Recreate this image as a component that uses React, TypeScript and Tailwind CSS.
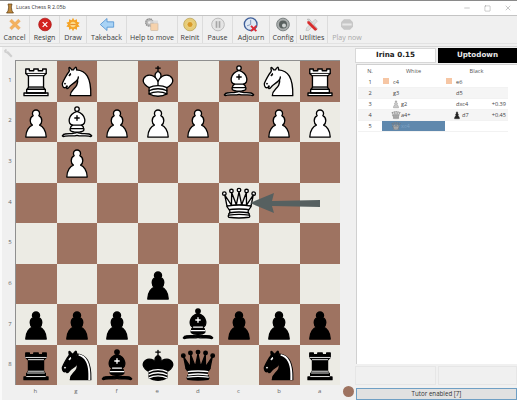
import React from "react";
import { Minus, Square, X } from "lucide-react";

type Kind = "p" | "r" | "n" | "b" | "k" | "q";

function Shapes({ kind, fill, line, inner }: { kind: Kind; fill: string; line: string; inner: string }) {
  const base = { fill, stroke: line, strokeWidth: 1.5, strokeLinecap: "round" as const, strokeLinejoin: "round" as const };
  const det = { fill: "none", stroke: inner, strokeWidth: 1.5, strokeLinecap: "round" as const, strokeLinejoin: "round" as const };
  if (kind === "p")
    return <path {...base} d="M22.5 9C20.29 9 18.5 10.79 18.5 13C18.5 13.89 18.79 14.71 19.28 15.38C17.33 16.5 16 18.59 16 21C16 23.03 16.94 24.84 18.41 26.03C15.41 27.09 11 31.58 11 39.5L34 39.5C34 31.58 29.59 27.09 26.59 26.03C28.06 24.84 29 23.03 29 21C29 18.59 27.67 16.5 25.72 15.38C26.21 14.71 26.5 13.89 26.5 13C26.5 10.79 24.71 9 22.5 9z" />;
  if (kind === "r")
    return (
      <g>
        <path {...base} d="M9 39L36 39L36 36L9 36z" />
        <path {...base} d="M12 36L12 32L33 32L33 36z" />
        <path {...base} d="M11 14L11 9L15 9L15 11L20 11L20 9L25 9L25 11L30 11L30 9L34 9L34 14L31 17L14 17z" />
        <path {...base} d="M31 17L31 29.5L14 29.5L14 17" />
        <path {...base} d="M31 29.5L32.5 32L12.5 32L14 29.5" />
        <path {...det} d="M12 35.5L33 35.5M13 31.5L32 31.5M14 29.5L31 29.5M14 16.5L31 16.5M11 14L34 14" strokeWidth={1} />
      </g>
    );
  if (kind === "n")
    return (
      <g>
        <path {...base} d="M22 10C32.5 11 38.5 18 38 39L15 39C15 30 25 32.5 23 18" />
        <path {...base} d="M24 18C24.38 20.91 18.45 25.37 16 27C13 29 13.18 31.34 11 31C9.958 30.06 12.41 27.96 11 28C10 28 11.19 29.23 10 30C9 30 5.997 31 6 26C6 24 12 14 12 14C12 14 13.89 12.1 14 10.5C13.27 9.506 13.5 8.5 13.5 7.5C14.5 6.5 16.5 10 16.5 10L18.5 10C18.5 10 19.28 8.008 21 7C22 7 22 10 22 10" />
        <circle cx="9" cy="25.5" r="0.6" fill={inner} stroke={inner} />
        <ellipse cx="14.5" cy="15.5" rx="0.6" ry="1.5" fill={inner} stroke={inner} transform="rotate(30 14.5 15.5)" />
        {inner === "#fff" && <path d="M24.55 10.4L24.1 11.85L24.6 12C27.75 13 30.25 14.49 32.5 18.75C34.75 23.01 35.75 29.06 35.25 39L35.2 39.5L37.45 39.5L37.5 39C38 28.94 36.62 22.15 34.25 17.66C31.88 13.17 28.46 11.02 25.06 10.5z" fill="#fff" stroke="none" />}
      </g>
    );
  if (kind === "b")
    return (
      <g>
        <path {...base} d="M9 36C12.39 35.03 19.11 36.43 22.5 34C25.89 36.43 32.61 35.03 36 36C36 36 37.65 36.54 39 38C38.32 38.97 37.35 38.99 36 38.5C32.61 37.53 25.89 38.96 22.5 37.5C19.11 38.96 12.39 37.53 9 38.5C7.65 38.99 6.68 38.97 6 38C7.35 36.06 9 36 9 36z" />
        <path {...base} d="M15 32C17.5 34.5 27.5 34.5 30 32C30.5 30.5 30 30 30 30C30 27.5 27.5 26 27.5 26C33 24.5 33.5 14.5 22.5 10.5C11.5 14.5 12 24.5 17.5 26C17.5 26 15 27.5 15 30C15 30 14.5 30.5 15 32z" />
        <circle {...base} cx="22.5" cy="8" r="2.5" />
        <path {...det} d="M17.5 26L27.5 26M15 30L30 30M22.5 15.5L22.5 20.5M20 18L25 18" />
      </g>
    );
  if (kind === "k")
    return (
      <g>
        <path {...base} fill="none" stroke={line} d="M22.5 11.63L22.5 6M20 8L25 8" />
        <path {...base} d="M22.5 25C22.5 25 27 17.5 25.5 14.5C25.5 14.5 24.5 12 22.5 12C20.5 12 19.5 14.5 19.5 14.5C18 17.5 22.5 25 22.5 25" />
        <path {...base} d="M12.5 37C18 40.5 27 40.5 32.5 37L32.5 30C32.5 30 41.5 25.5 38.5 19.5C34.5 13 25 16 22.5 23.5L22.5 27L22.5 23.5C20 16 10.5 13 6.5 19.5C3.5 25.5 12.5 30 12.5 30z" />
        <path {...det} d="M12.5 30C18 27 27 27 32.5 30M12.5 33.5C18 30.5 27 30.5 32.5 33.5M12.5 37C18 34 27 34 32.5 37" />
      </g>
    );
  return (
    <g>
      <circle {...base} cx="6" cy="12" r="2" />
      <circle {...base} cx="14" cy="9" r="2" />
      <circle {...base} cx="22.5" cy="8" r="2" />
      <circle {...base} cx="31" cy="9" r="2" />
      <circle {...base} cx="39" cy="12" r="2" />
      <path {...base} d="M9 26C17.5 24.5 30 24.5 36 26L38.5 13.5L31 25L30.7 10.9L25.5 24.5L22.5 10L19.5 24.5L14.3 10.9L14 25L6.5 13.5z" />
      <path {...base} d="M9 26C9 28 10.5 28 11.5 30C12.5 31.5 12.5 31 12 33.5C10.5 34.5 11 36 11 36C9.5 37.5 11 38.5 11 38.5C17.5 39.5 27.5 39.5 34 38.5C34 38.5 35.5 37.5 34 36C34 36 34.5 34.5 33 33.5C32.5 31 32.5 31.5 33.5 30C34.5 28 36 28 36 26C27.5 24.5 17.5 24.5 9 26z" />
      <path {...det} d="M11.5 30C15 29 30 29 33.5 30M12 33.5C18 32.5 27 32.5 33 33.5M11 36.2C18 35.2 27 35.2 34 36.2" />
    </g>
  );
}

function Piece({ c, size = 40 }: { c: string; size?: number }) {
  const black = c === c.toLowerCase();
  const kind = c.toLowerCase() as Kind;
  return (
    <svg width={size} height={size} viewBox="0 0 45 45" className="block">
      {black ? <Shapes kind={kind} fill="#000" line="#000" inner="#fff" /> : <Shapes kind={kind} fill="#fff" line="#000" inner="#000" />}
    </svg>
  );
}

function MiniPiece({ kind, dark }: { kind: Kind; dark?: boolean }) {
  return (
    <svg width={10} height={10} viewBox="0 0 45 45" className="block shrink-0">
      {dark ? <Shapes kind={kind} fill="#222" line="#222" inner="#ddd" /> : <Shapes kind={kind} fill="#c9c9c9" line="#6e6e6e" inner="#6e6e6e" />}
    </svg>
  );
}

const rows = ["RN.K.BNR", "PBPPP.PP", ".P......", "........", "........", "...p....", "ppp.bppp", "rnbkq.nr"];
const files = ["h", "g", "f", "e", "d", "c", "b", "a"];

const Icon = {
  cancel: <path d="M4 6L7 3L12 8L17 3L20 6L15 11L20 16L17 19L12 14L7 19L4 16L9 11z" fill="#f3b15f" stroke="#e59a45" strokeWidth="0.6" />,
  resign: (
    <g>
      <circle cx="12" cy="11" r="9.5" fill="#d3211f" stroke="#a51414" />
      <path d="M8.5 7.5L15.5 14.5M15.5 7.5L8.5 14.5" stroke="#fff" strokeWidth="1.8" />
    </g>
  ),
  draw: (
    <g>
      <path d="M12 1L14 4.5L18 3L18 7L22 8.5L19.5 11L22 14L18 15L18 19L14 17.5L12 21L10 17.5L6 19L6 15L2 14L4.5 11L2 8.5L6 7L6 3L10 4.5z" fill="#f5a428" />
      <circle cx="12" cy="11" r="4" fill="#fbd98a" />
      <path d="M8 11L16 11" stroke="#e07a1a" strokeWidth="1.2" />
    </g>
  ),
  back: <path d="M2 11L12 2L12 7L22 7L22 15L12 15L12 20z" fill="#a9d3f5" stroke="#4c8fd0" strokeWidth="1.2" strokeLinejoin="round" />,
  help: (
    <g>
      <circle cx="8" cy="8" r="5.5" fill="#b9b9b9" stroke="#8c8c8c" strokeDasharray="2 1" strokeWidth="2" />
      <circle cx="8" cy="8" r="2" fill="#eee" />
      <rect x="10" y="9" width="11" height="11" rx="1" fill="#f6d2ac" stroke="#c9b7a3" />
      <path d="M9 5h12v4H9z" fill="#d8d8d8" opacity="0.8" />
    </g>
  ),
  reinit: (
    <g>
      <circle cx="12" cy="11" r="9.5" fill="#e6cc78" stroke="#b39a49" />
      <circle cx="12" cy="11" r="4.5" fill="#d89a28" stroke="#f3e2a6" />
    </g>
  ),
  pause: (
    <g>
      <circle cx="12" cy="11" r="9.5" fill="#e4e4e4" stroke="#a5a5a5" />
      <rect x="8.5" y="6" width="2.5" height="10" fill="#a6a6a6" />
      <rect x="13" y="6" width="2.5" height="10" fill="#a6a6a6" />
    </g>
  ),
  adjourn: (
    <g>
      <circle cx="11.5" cy="10.5" r="9.5" fill="#dfe8f3" stroke="#3f5f9a" strokeWidth="2" />
      <path d="M11.5 4L11.5 11L6 13" stroke="#7d93ba" strokeWidth="1.4" fill="none" />
      <path d="M13 12L16 15L19 12L21 14L18 17L21 20L19 22L16 19L13 22L11 20L14 17L11 14z" fill="#dd2a35" />
    </g>
  ),
  config: (
    <g>
      <circle cx="12" cy="11" r="9.5" fill="#a9adad" stroke="#7f8585" strokeWidth="1.5" />
      <circle cx="12" cy="11" r="6" fill="#59605f" />
      <circle cx="13.5" cy="12.5" r="3" fill="#cfd3d3" />
    </g>
  ),
  util: (
    <g>
      <path d="M5 3L8 3L20 17L17 20z" fill="#d8d8d8" stroke="#aaa" />
      <path d="M17 3L20 6L7 20L3 20L4 16z" fill="#d8d8d8" stroke="#aaa" opacity="0.7" />
      <path d="M5 6L8 6L20 18L18 20L16 20L5 9z" fill="#d92c2c" />
    </g>
  ),
  play: (
    <g>
      <path d="M7.5 3L16.5 3L21 7.5L21 14.5L16.5 19L7.5 19L3 14.5L3 7.5z" fill="#bdbdbd" />
      <rect x="5" y="9.5" width="14" height="3" fill="#e6e6e6" />
    </g>
  ),
};

const tools: { label: string; w: string; icon: React.ReactNode; off?: boolean }[] = [
  { label: "Cancel", w: "w-[30px]", icon: Icon.cancel },
  { label: "Resign", w: "w-[30px]", icon: Icon.resign },
  { label: "Draw", w: "w-[27px]", icon: Icon.draw },
  { label: "Takeback", w: "w-[40px]", icon: Icon.back },
  { label: "Help to move", w: "w-[51px]", icon: Icon.help },
  { label: "Reinit", w: "w-[25px]", icon: Icon.reinit },
  { label: "Pause", w: "w-[30px]", icon: Icon.pause },
  { label: "Adjourn", w: "w-[37px]", icon: Icon.adjourn },
  { label: "Config", w: "w-[27px]", icon: Icon.config },
  { label: "Utilities", w: "w-[31px]", icon: Icon.util },
  { label: "Play now", w: "w-[38px]", icon: Icon.play, off: true },
];

const moves: { n: number; w: string; wi?: Kind; wsq?: boolean; b?: string; bi?: boolean; bsq?: boolean; score?: string; sel?: boolean }[] = [
  { n: 1, w: "c4", wsq: true, b: "e6", bsq: true },
  { n: 2, w: "g3", b: "d5" },
  { n: 3, w: "g2", wi: "p", b: "dxc4", score: "+0.39" },
  { n: 4, w: "a4+", wi: "q", b: "d7", bi: true, score: "+0.45" },
  { n: 5, w: "xc4", wi: "q", sel: true },
];

export default function App() {
  return (
    <div className="w-[517px] h-[400px] overflow-hidden bg-[#f0f0f0] flex flex-col text-[#333] font-['Open_Sans','Noto_Sans',sans-serif]">
      <div className="h-[16px] shrink-0 bg-white border-t border-t-[#8a8a8a] border-b border-b-[#c4c4c4] flex items-center pl-[6px]">
        <svg width="8" height="11" viewBox="0 0 8 11" className="mr-[1px]">
          <path d="M2 1L6 1L5.3 4L6 8L7.5 10L.5 10L2 8L2.7 4z" fill="#c08a3c" stroke="#5b3b12" strokeWidth="0.7" />
        </svg>
        <span className="ml-[1px] text-[5.3px] text-[#333] whitespace-nowrap">Lucas Chess R 2.05b</span>
        <div className="ml-auto flex items-center gap-[13px] pr-[5px] text-[#555]">
          <Minus size={8} strokeWidth={1} />
          <Square size={7} strokeWidth={1} />
          <X size={8} strokeWidth={1} />
        </div>
      </div>

      <div className="h-[28px] shrink-0 flex border-b border-b-[#e2e2e2]">
        {tools.map((t) => (
          <div key={t.label} className={`${t.w} shrink-0 flex flex-col items-center pt-[1px] border-r border-r-[#dcdcdc] last:border-r-0`}>
            <svg width="16" height="16" viewBox="0 0 24 22" className={t.off ? "opacity-80" : ""}>
              {t.icon}
            </svg>
            <span className={`text-[7.1px] leading-[11px] whitespace-nowrap ${t.off ? "text-[#a8a8a8]" : "text-[#3a3a3a]"}`}>{t.label}</span>
          </div>
        ))}
      </div>

      <div className="flex-1 flex min-h-0 mt-[2px] border-t border-t-[#d6d6d6] bg-[#f0f0f0]">
        <div className="w-[354px] shrink-0 flex flex-col relative border-l-2 border-l-[#fafafa]">
          <svg width="10" height="10" viewBox="0 0 10 10" className="ml-[1px] mt-[1px] block shrink-0">
            <path d="M1 2.5L3 .8L4 2.2L3.2 3L3.8 3.7L4.8 3L6 4L9.5 8L8 9.5L4 5.5L2.8 5L1.5 4.5z" fill="#cfcfcf" />
          </svg>
          <div className="flex mt-[2px]">
            <div className="w-[13px] shrink-0 grid grid-rows-8 h-[325px]">
              {rows.map((_, i) => (
                <div key={i} className="flex items-center justify-center text-[6px] text-[#666] pl-[3px]">
                  {i + 1}
                </div>
              ))}
            </div>
            <div className="relative w-[325px] h-[325px] shrink-0 grid grid-cols-8 grid-rows-8 border-l border-t border-[#8f8f8f]">
              {rows.flatMap((row, r) =>
                row.split("").map((p, f) => (
                  <div key={`${r}-${f}`} className={`flex items-center justify-center min-w-0 min-h-0 ${(r + f) % 2 === 0 ? "bg-[#ecebe4]" : "bg-[#9e7361]"}`}>
                    {p !== "." && <Piece c={p} />}
                  </div>
                ))
              )}
              <div className="absolute left-[202.5px] top-[121.5px] w-[40.5px] h-[40.5px] flex items-center justify-center">
                <Piece c="Q" />
              </div>
              <svg width="325" height="325" viewBox="0 0 325 325" className="absolute left-0 top-0 pointer-events-none">
                <path d="M234 142L258 132L256 140L304 139L304 146L256 145L258 152z" fill="#566060" />
              </svg>
            </div>
          </div>
          <div className="flex items-start h-[15px]">
            <div className="w-[13px] shrink-0" />
            <div className="w-[325px] shrink-0 grid grid-cols-8">
              {files.map((f) => (
                <div key={f} className="text-center text-[6px] leading-[12px] text-[#666]">
                  {f}
                </div>
              ))}
            </div>
            <div className="w-[11px] h-[11px] rounded-full bg-[#9e7361] ml-[3px] mt-[1px] shrink-0" />
          </div>
        </div>

        <div className="flex-1 min-w-0 flex flex-col pt-[1px] pl-[1px]">
          <div className="h-[15px] flex gap-[2px] shrink-0 font-['DejaVu_Sans',sans-serif] font-bold text-[7.2px]">
            <div className="w-[81px] bg-white border border-[#d8d8d8] flex items-center justify-center text-[#222]">Irina 0.15</div>
            <div className="flex-1 bg-black text-[#e8e8e8] flex items-center justify-center">Uptodown</div>
          </div>
          <div className="h-[300px] mt-[1px] ml-[1px] bg-white border-t border-l border-[#d0d0d0] shrink-0 pl-[1px] text-[5.6px] text-[#444]">
            <div className="w-[150px]">
              <div className="grid grid-cols-[24px_63px_63px] h-[12px] items-center text-center text-[#555]">
                <span>N.</span>
                <span>White</span>
                <span>Black</span>
              </div>
              {moves.map((m) => (
                <div key={m.n} className={`grid grid-cols-[24px_63px_63px] h-[11px] items-center border-b border-[#f2f2f2] ${m.n % 2 === 0 ? "bg-[#f5f5f5]" : "bg-white"}`}>
                  <span className="text-center">{m.n}</span>
                  <div className={`relative h-full flex items-center ${m.sel ? "bg-[#5f88ad] text-[#7fa3c4]" : ""} ${m.wi ? "pl-[9px]" : "pl-[11px]"}`}>
                    {m.wsq && <span className="absolute left-[1px] top-[1px] w-[6px] h-[6px] bg-[#f6c6a4]" />}
                    {m.wi && <MiniPiece kind={m.wi} />}
                    <span>{m.w}</span>
                  </div>
                  <div className={`relative h-full flex items-center pr-[2px] ${m.bi ? "pl-[7px]" : "pl-[11px]"}`}>
                    {m.bsq && <span className="absolute left-[1px] top-[1px] w-[6px] h-[6px] bg-[#f6c6a4]" />}
                    {m.bi && <MiniPiece kind="p" dark />}
                    {m.b && <span>{m.b}</span>}
                    {m.score && <span className="ml-auto">{m.score}</span>}
                  </div>
                </div>
              ))}
            </div>
          </div>
          <div className="h-[19px] flex gap-[2px] mt-[2px] shrink-0">
            <div className="w-[81px] border border-[#e6e6e6]" />
            <div className="flex-1 border border-[#e6e6e6]" />
          </div>
          <div className="h-[12px] mt-[3px] ml-[1px] shrink-0 bg-[#e1e1e1] border border-[#6f9fc4] flex items-center justify-center text-[6.2px] text-[#333] whitespace-nowrap">
            Tutor enabled [7]
          </div>
        </div>
      </div>
    </div>
  );
}
